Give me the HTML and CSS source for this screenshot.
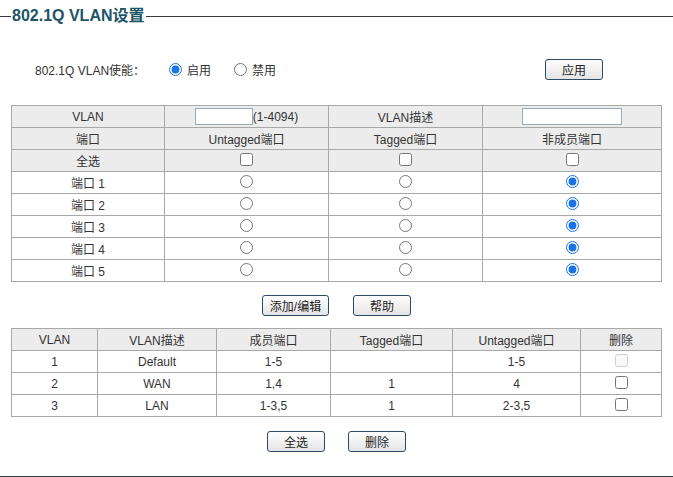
FILE: index.html
```html
<!DOCTYPE html>
<html lang="zh-CN">
<head>
  <meta charset="UTF-8">
  <title>802.1Q VLAN设置</title>
  <link rel="stylesheet" href="styles.css">
</head>
<body>
  <fieldset class="panel">
    <legend>802.1Q VLAN设置</legend>

    <!-- enable switch -->
    <div class="enable-row">
      <span class="enable-label">802.1Q VLAN使能：</span>
      <label class="radio-opt"><input type="radio" name="enable" checked>启用</label>
      <label class="radio-opt"><input type="radio" name="enable">禁用</label>
      <button class="btn apply-btn">应用</button>
    </div>

    <!-- port membership -->
    <table class="grid port-grid">
      <colgroup>
        <col style="width:153px"><col style="width:164px"><col style="width:154px"><col style="width:179px">
      </colgroup>
      <tr class="head">
        <td>VLAN</td>
        <td><input type="text" class="txt vid"><span class="hint">(1-4094)</span></td>
        <td>VLAN描述</td>
        <td><input type="text" class="txt desc"></td>
      </tr>
      <tr class="head">
        <td>端口</td>
        <td>Untagged端口</td>
        <td>Tagged端口</td>
        <td>非成员端口</td>
      </tr>
      <tr class="head">
        <td>全选</td>
        <td><input type="checkbox"></td>
        <td><input type="checkbox"></td>
        <td><input type="checkbox"></td>
      </tr>
      <tr><td>端口 1</td><td><input type="radio" name="p1"></td><td><input type="radio" name="p1"></td><td><input type="radio" name="p1" checked></td></tr>
      <tr><td>端口 2</td><td><input type="radio" name="p2"></td><td><input type="radio" name="p2"></td><td><input type="radio" name="p2" checked></td></tr>
      <tr><td>端口 3</td><td><input type="radio" name="p3"></td><td><input type="radio" name="p3"></td><td><input type="radio" name="p3" checked></td></tr>
      <tr><td>端口 4</td><td><input type="radio" name="p4"></td><td><input type="radio" name="p4"></td><td><input type="radio" name="p4" checked></td></tr>
      <tr><td>端口 5</td><td><input type="radio" name="p5"></td><td><input type="radio" name="p5"></td><td><input type="radio" name="p5" checked></td></tr>
    </table>

    <div class="btn-row">
      <button class="btn wide">添加/编辑</button>
      <button class="btn">帮助</button>
    </div>

    <!-- vlan list -->
    <table class="grid vlan-list">
      <colgroup>
        <col style="width:86px"><col style="width:119px"><col style="width:114px"><col style="width:122px"><col style="width:128px"><col style="width:81px">
      </colgroup>
      <tr class="head">
        <td>VLAN</td><td>VLAN描述</td><td>成员端口</td><td>Tagged端口</td><td>Untagged端口</td><td>删除</td>
      </tr>
      <tr><td>1</td><td>Default</td><td>1-5</td><td></td><td>1-5</td><td><input type="checkbox" disabled></td></tr>
      <tr><td>2</td><td>WAN</td><td>1,4</td><td>1</td><td>4</td><td><input type="checkbox"></td></tr>
      <tr><td>3</td><td>LAN</td><td>1-3,5</td><td>1</td><td>2-3,5</td><td><input type="checkbox"></td></tr>
    </table>

    <div class="btn-row last">
      <button class="btn">全选</button>
      <button class="btn">删除</button>
    </div>
  </fieldset>
</body>
</html>
```

FILE: styles.css
```css
body {
  margin: 0;
  font-family: "Liberation Sans", "Noto Sans CJK SC", sans-serif;
  font-size: 12px;
  color: #333;
  background: #fff;
}
input[type=radio], input[type=checkbox] {
  accent-color: #1a73e8;
  margin: 0;
  width: 13px;
  height: 13px;
  vertical-align: middle;
}
.panel {
  margin: 6px 0 0 0;
  padding: 0 11px 24px 11px;
  border: 0;
  border-top: 1px solid #3a3a3a;
  border-bottom: 2px solid #2e3c45;
}
.panel legend {
  padding: 0 1px;
  margin-left: 0;
  font-size: 16px;
  line-height: 20px;
  font-weight: bold;
  color: #1d5566;
}
.enable-row {
  display: flex;
  align-items: center;
  height: 21px;
  margin-top: 33px;
}
.enable-label { width: 158px; padding-left: 24px; box-sizing: border-box; }
.radio-opt { display: flex; align-items: center; margin-right: 23px; }
.radio-opt input { margin: 0 5px 0 0; }
.apply-btn { margin-left: auto; margin-right: 59px; }

.grid td input[type=radio],
.grid td input[type=checkbox] { position: relative; top: -2px; }

.btn {
  width: 58px;
  height: 21px;
  padding: 0;
  font-family: inherit;
  font-size: 12px;
  color: #222;
  background: linear-gradient(#ffffff, #e4e4e4);
  border: 1px solid #2c4a66;
  border-radius: 3px;
}
.btn.wide { width: 67px; }

.grid {
  width: 650px;
  border-collapse: collapse;
  table-layout: fixed;
}
.grid td {
  height: 21px;
  padding: 0;
  border: 1px solid #a8a8a8;
  text-align: center;
  vertical-align: middle;
}
.grid tr.head td { background: #ececec; }
.port-grid { margin-top: 25px; }

.txt {
  height: 15px;
  padding: 0;
  border: 1px solid #9aaab8;
  vertical-align: middle;
  font-size: 12px;
}
.txt.vid { width: 56px; }
.txt.desc { width: 98px; }
.hint { vertical-align: middle; }

.btn-row {
  display: flex;
  justify-content: center;
  gap: 24px;
  margin: 13px 0 12px;
}
.btn-row.last { margin: 14px 0 0; gap: 23px; }
```
